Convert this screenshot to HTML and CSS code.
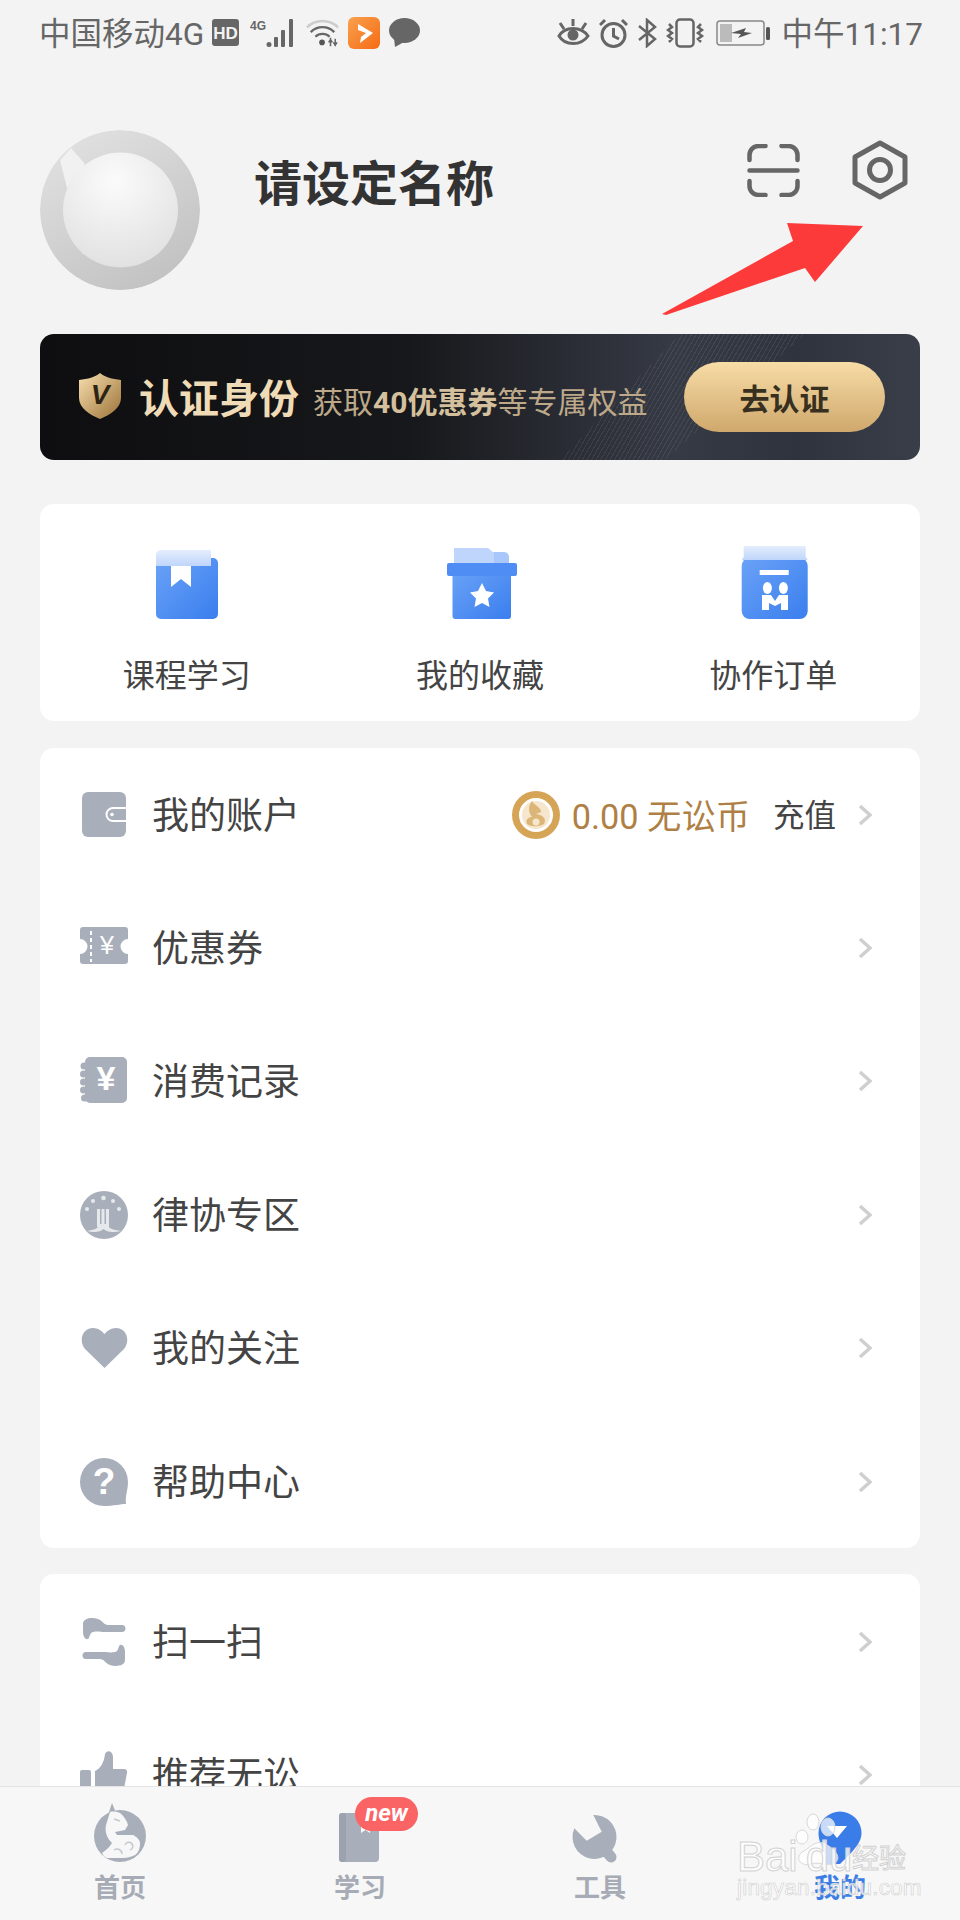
FILE: index.html
```html
<!DOCTYPE html>
<html lang="zh-CN">
<head>
<meta charset="utf-8">
<title>我的</title>
<link rel="stylesheet" href="styles.css">
</head>
<body>
<div class="phone">
  <div class="status">
    <div class="status-group">
      <span class="status-text status-carrier">中国移动4G</span>
      <svg width="29" height="28" viewBox="0 0 29 28"><rect width="27" height="27" rx="3" fill="#666"/><text x="13.5" y="19.5" class="hd">HD</text></svg>
      <svg width="47" height="30" viewBox="0 0 47 30"><text x="0" y="12" class="sig">4G</text><g fill="#666"><circle cx="19" cy="26.5" r="2.5"/><rect x="24" y="19" width="4" height="10" rx="1"/><rect x="31" y="12" width="4" height="17" rx="1"/><rect x="39" y="1" width="4" height="28" rx="1"/></g></svg>
      <svg width="33" height="30" viewBox="0 0 35 30" fill="none"><path d="M1 9 C10 0 25 0 34 9" stroke="#ccc" stroke-width="2.5"/><path d="M5 14 C12 7 23 7 30 14" stroke="#666" stroke-width="2.5"/><path d="M10 19 C14 15 21 15 25 19" stroke="#666" stroke-width="2.5"/><circle cx="17" cy="25" r="3" fill="#555"/><path d="M26 20 v9 M31 29 v-8 M24 25 l2-3 2 3 M29 25 l2 3 2-3" stroke="#666" stroke-width="1.6"/></svg>
      <svg width="32" height="32" viewBox="0 0 32 32"><defs><linearGradient id="ga" x1="0" y1="0" x2="1" y2="1"><stop offset="0" stop-color="#f9a14e"/><stop offset="1" stop-color="#f66b14"/></linearGradient></defs><rect width="32" height="32" rx="6" fill="url(#ga)"/><path d="M10 7 L25 16 L12 26 L13 20 L18 16 L10 13 Z" fill="#fff"/></svg>
      <svg width="31" height="30" viewBox="0 0 31 30"><ellipse cx="15.500" cy="12.500" rx="15.500" ry="12.500" fill="#666"/><path d="M5 20 L6 29 L15 24 Z" fill="#666"/></svg>
    </div>
    <div class="status-group">
      <svg width="33" height="30" viewBox="0 0 33 30" fill="none" stroke="#666" stroke-width="3"><path d="M2 18 C8 8 24 8 31 18 C24 28 8 28 2 18 Z"/><circle cx="16" cy="17" r="5.500" fill="#666" stroke="none"/><path d="M3 5 L7 11 M16 1 V8 M29 5 L25 11"/></svg>
      <svg width="29" height="30" viewBox="0 0 29 30" fill="none" stroke="#666" stroke-width="3"><circle cx="14.500" cy="17" r="11.500"/><path d="M14.500 10 V18 L20 21 M1 7 L6 2 M28 7 L23 2"/></svg>
      <svg width="20" height="30" viewBox="0 0 20 30" fill="none" stroke="#666" stroke-width="2.500"><path d="M2 8 L18 21 L10 28 V2 L18 9 L2 22"/></svg>
      <svg width="41" height="30" viewBox="0 0 41 30" fill="none" stroke="#666" stroke-width="2.500"><rect x="10.500" y="1.500" width="17" height="27" rx="3.500"/><path d="M3 6 L6 9 L2 12 L6 15 L2 18 L6 21 L3 24 M35 6 L32 9 L36 12 L32 15 L36 18 L32 21 L35 24"/></svg>
      <svg width="57" height="26" viewBox="0 0 57 26"><rect x="1" y="1" width="47" height="24" rx="3" fill="none" stroke="#888" stroke-width="1.500"/><rect x="4" y="4" width="12" height="18" fill="#bbb"/><path d="M15 13 L30 8 L28 12 L36 13 L22 18 L25 14 Z" fill="#555"/><rect x="50" y="7" width="4" height="13" rx="1.500" fill="#555"/></svg>
      <span class="status-text">中午11:17</span>
    </div>
  </div>

  <header class="profile">
    <svg class="avatar" width="160" height="160" viewBox="0 0 160 160">
      <defs>
        <linearGradient id="ring" x1="0" y1="0" x2="0.6" y2="1"><stop offset="0" stop-color="#e4e4e4"/><stop offset="1" stop-color="#c3c3c3"/></linearGradient>
        <radialGradient id="ball" cx="0.45" cy="0.25" r="0.85"><stop offset="0" stop-color="#fbfbfb"/><stop offset="1" stop-color="#dedede"/></radialGradient>
      </defs>
      <circle cx="80" cy="80" r="80" fill="url(#ring)"/>
      <path d="M20 30 L31 18 L45 34 L27 58 Z" fill="#f1f1f1"/>
      <circle cx="80.500" cy="80" r="57.500" fill="url(#ball)"/>
    </svg>
    <h1 class="name">请设定名称</h1>
    <div class="actions">
      <svg width="53" height="53" viewBox="0 0 53 53" fill="none" stroke="#666" stroke-width="4.500" stroke-linecap="round"><path d="M2.500 16 V11 a9 9 0 0 1 9-9 h7 M34.500 2 h7 a9 9 0 0 1 9 9 v5 M2.500 37 v5 a9 9 0 0 0 9 9 h7 M34.500 51 h7 a9 9 0 0 0 9-9 v-5 M2.500 26.500 H50.500"/></svg>
      <svg width="56" height="60" viewBox="0 0 56 60" fill="none" stroke="#666" stroke-width="5" stroke-linejoin="round"><path d="M28 3 L53 17 V43 L28 57 L3 43 V17 Z"/><circle cx="28" cy="30" r="10.500"/></svg>
    </div>
  </header>

  <section class="banner">
    <svg class="shield" width="42" height="46" viewBox="0 0 42 46">
      <defs><linearGradient id="gold" x1="0" y1="0" x2="1" y2="1"><stop offset="0" stop-color="#f6dfae"/><stop offset="1" stop-color="#9c7238"/></linearGradient></defs>
      <path d="M21 0 C26 4 33 6 42 7 V25 C42 35 31 42 21 46 C11 42 0 35 0 25 V7 C9 6 16 4 21 0 Z" fill="url(#gold)"/>
      <text x="21" y="31" class="vee">V</text>
    </svg>
    <span class="banner-title">认证身份</span>
    <span class="banner-sub">获取<b>40优惠券</b>等专属权益</span>
    <span class="banner-btn">去认证</span>
  </section>

  <section class="card shortcuts">
    <div class="shortcut">
      <svg width="80" height="76" viewBox="0 0 80 76">
        <defs><linearGradient id="blue" x1="0" y1="0" x2="1" y2="1"><stop offset="0" stop-color="#6aa2f7"/><stop offset="1" stop-color="#3a7eee"/></linearGradient>
        <linearGradient id="pale" x1="0" y1="0" x2="0" y2="1"><stop offset="0" stop-color="#e4edfd"/><stop offset="1" stop-color="#bfd5fb"/></linearGradient></defs>
        <rect x="9" y="12" width="62" height="61" rx="5" fill="url(#blue)"/>
        <path d="M14 4 H64 V20 H9 V9 a5 5 0 0 1 5-5 Z" fill="url(#pale)"/>
        <path d="M24 20 H44 V41 L34 33 L24 41 Z" fill="#fff"/>
      </svg>
      <span>课程学习</span>
    </div>
    <div class="shortcut">
      <svg width="80" height="76" viewBox="0 0 80 76">
        <path d="M50 6 H64 a5 5 0 0 1 5 5 V20 H50 Z" fill="#a9c7fa"/>
        <path d="M14 2 H48 L54 7 V20 H14 Z" fill="#bfd5fb"/>
        <rect x="12.500" y="25" width="58.500" height="48" rx="3" fill="url(#blue)"/>
        <rect x="7" y="17" width="70" height="13" rx="2" fill="#4f8cf3"/>
        <path d="M42 37 L46 45 L54 46.500 L48 52.500 L49.500 61 L42 57 L34.500 61 L36 52.500 L30 46.500 L38 45 Z" fill="#fff"/>
      </svg>
      <span>我的收藏</span>
    </div>
    <div class="shortcut">
      <svg width="80" height="76" viewBox="0 0 80 76">
        <rect x="8.700" y="12" width="66" height="61" rx="8" fill="url(#blue)"/>
        <path d="M10.700 0 H72.700 V11 L74.700 14 H8.700 L10.700 11 Z" fill="url(#pale)"/>
        <rect x="26.700" y="24" width="29" height="5" fill="#fff"/>
        <ellipse cx="34.400" cy="42" rx="4.500" ry="6" fill="#fff"/><ellipse cx="50.400" cy="42" rx="4.500" ry="6" fill="#fff"/>
        <path d="M29 49 H38 L42 55 L46 49 H55 V64 H48 V57 L42 60 L36 57 V64 H29 Z" fill="#fff"/>
      </svg>
      <span>协作订单</span>
    </div>
  </section>

  <section class="card list">
    <div class="row">
      <svg class="ico" width="48" height="48" viewBox="0 0 48 48"><rect x="2" y="1" width="44" height="45" rx="6" fill="#a9afba"/><path d="M46 17 H33 a6.500 6.500 0 0 0 0 13 H46" fill="none" stroke="#fff" stroke-width="2"/><circle cx="32" cy="23.500" r="1.800" fill="#fff"/></svg>
      <span class="label">我的账户</span>
      <svg class="coin" width="48" height="48" viewBox="0 0 48 48"><circle cx="24" cy="24" r="24" fill="#d5a456"/><circle cx="24" cy="24" r="15.500" fill="#f5e6cd" stroke="#fff" stroke-width="3"/><path d="M20 10 C23 15 29 16 29 21 L24 23 C31 24 35 28 32 33 C27 36 19 36 15 33 C13 28 17 26 20 26 C16 21 16 15 20 10 Z" fill="#dcb677"/><circle cx="24" cy="31" r="3.500" fill="#f5e6cd"/></svg>
      <span class="balance">0.00 无讼币</span>
      <span class="recharge">充值</span>
      <svg class="chev" width="14" height="22" viewBox="0 0 14 22"><path d="M2 2 L12 11 L2 20" /></svg>
    </div>
    <div class="row">
      <svg class="ico" width="48" height="48" viewBox="0 0 48 48"><path d="M3 3 H45 a3 3 0 0 1 3 3 V15 a7 7 0 0 0 0 15 V37 a3 3 0 0 1-3 3 H3 a3 3 0 0 1-3-3 V30 a7 7 0 0 0 0-15 V6 a3 3 0 0 1 3-3 Z" fill="#a9afba"/><path d="M11 7 V38" stroke="#fff" stroke-width="2" stroke-dasharray="4 3"/><text x="27" y="30" class="yen small">¥</text></svg>
      <span class="label">优惠券</span>
      <svg class="chev" width="14" height="22" viewBox="0 0 14 22"><path d="M2 2 L12 11 L2 20" /></svg>
    </div>
    <div class="row">
      <svg class="ico" width="48" height="48" viewBox="0 0 48 48"><rect x="5" y="0" width="42" height="46" rx="5" fill="#a9afba"/><g fill="#a9afba"><circle cx="4" cy="9" r="3.500"/><circle cx="3.500" cy="17" r="3.500"/><circle cx="3.500" cy="25" r="3.500"/><circle cx="3.500" cy="33" r="3.500"/><circle cx="4.500" cy="41" r="3.500"/></g><text x="26" y="33" class="yen">¥</text></svg>
      <span class="label">消费记录</span>
      <svg class="chev" width="14" height="22" viewBox="0 0 14 22"><path d="M2 2 L12 11 L2 20" /></svg>
    </div>
    <div class="row">
      <svg class="ico" width="48" height="48" viewBox="0 0 48 48"><circle cx="24" cy="24" r="24" fill="#a9afba"/><g fill="#e6e8ec"><circle cx="7" cy="18" r="2"/><circle cx="13" cy="10" r="2"/><circle cx="23.500" cy="7" r="2.300"/><circle cx="33" cy="10" r="2"/><circle cx="39" cy="18" r="2"/><rect x="17" y="18" width="3" height="18"/><rect x="21.500" y="18" width="3" height="18"/><rect x="26" y="18" width="3" height="18"/></g><path d="M7 40 C14 39 19 37 20 33 H27 C28 37 33 39 41 40 C32 42 27 41 23.500 38 C20 41 15 42 7 40 Z" fill="#e6e8ec"/></svg>
      <span class="label">律协专区</span>
      <svg class="chev" width="14" height="22" viewBox="0 0 14 22"><path d="M2 2 L12 11 L2 20" /></svg>
    </div>
    <div class="row">
      <svg class="ico" width="48" height="48" viewBox="0 0 48 48"><path d="M24.500 44 L5 25 C-2 16 3 4 13 4 C18 4 22 7 24.500 10 C27 7 31 4 36 4 C46 4 51 16 44 25 Z" fill="#a9afba"/></svg>
      <span class="label">我的关注</span>
      <svg class="chev" width="14" height="22" viewBox="0 0 14 22"><path d="M2 2 L12 11 L2 20" /></svg>
    </div>
    <div class="row">
      <svg class="ico" width="48" height="48" viewBox="0 0 48 48"><path d="M24 0 a24 24 0 0 1 24 24 C48 32 45 38 46 46 C40 46 34 48 24 48 a24 24 0 0 1 0-48 Z" fill="#a9afba"/><text x="24" y="36" class="qm">?</text></svg>
      <span class="label">帮助中心</span>
      <svg class="chev" width="14" height="22" viewBox="0 0 14 22"><path d="M2 2 L12 11 L2 20" /></svg>
    </div>
  </section>

  <section class="card list list-more">
    <div class="row">
      <svg class="ico" width="48" height="48" viewBox="0 0 48 48" fill="#a9afba"><path d="M3 6 C3 0 12 -1 18 1 C23 3 24 7 28 7 H42 a3 3 0 0 1 0 7 H24 C20 14 19 13 13 14 C9 15 10 20 8 21 C5 22 3 18 3 14 Z"/><path d="M45 42 C45 48 36 49 30 47 C25 45 24 41 20 41 H6 a3 3 0 0 1 0-7 H24 C28 34 29 35 35 34 C39 33 38 28 40 27 C43 26 45 30 45 34 Z"/></svg>
      <span class="label">扫一扫</span>
      <svg class="chev" width="14" height="22" viewBox="0 0 14 22"><path d="M2 2 L12 11 L2 20" /></svg>
    </div>
    <div class="row">
      <svg class="ico" width="48" height="48" viewBox="0 0 48 48" fill="#a9afba"><rect x="0" y="19" width="11" height="29" rx="2"/><path d="M15 20 C20 18 24 12 25 3 C27 -2 33 0 33 6 V18 H44 a3 3 0 0 1 3 4 L42 48 H15 Z"/></svg>
      <span class="label">推荐无讼</span>
      <svg class="chev" width="14" height="22" viewBox="0 0 14 22"><path d="M2 2 L12 11 L2 20" /></svg>
    </div>
  </section>

  <svg class="arrow" width="210" height="100" viewBox="0 0 210 100"><path d="M2 94 L133 21 L127 3 L203 6 L155 62 L145 48 L6 95 Z" fill="#fd3a3a"/></svg>

  <nav class="tabs">
    <div class="tab">
      <svg width="100" height="72" viewBox="0 0 100 72"><circle cx="50" cy="41" r="26" fill="#a9afba"/><path d="M38 20 L42 8 L46 18 Z" fill="#a9afba"/><path d="M40 17 C44 16 48 17 50 18 C54 21 57 26 58 30 L55 35 L45 37 L47 40 L63 40 C67 42 70 45 70 48 C70 54 68 58 65 60 C61 62 57 63 53 63 L37 63 C34 62 33 60 32 58 C36 55 40 52 42 48 C39 45 37 42 36 38 C35 33 36 29 37 27 C38 24 39 20 40 17 Z" fill="#f7f7f7"/><path d="M55 50 a4 4 0 1 1 5 5 M44 55 a5 5 0 0 1 8 4 M44 24 l6 2" fill="none" stroke="#c4c8d0" stroke-width="1.500"/></svg>
      <span>首页</span>
    </div>
    <div class="tab">
      <svg width="100" height="72" viewBox="0 0 100 72"><rect x="29" y="18" width="40" height="49" rx="4" fill="#a9afba"/><rect x="29" y="18" width="7" height="49" rx="3" fill="#9ca2ae"/><path d="M51 30 H60 V38 L55.500 35 L51 38 Z" fill="#f7f7f7"/></svg>
      <span>学习</span>
      <em class="badge">new</em>
    </div>
    <div class="tab">
      <svg width="100" height="72" viewBox="0 0 100 72"><path d="M24.300 33.300 L36.700 45.700 L51.700 36.700 L43.300 20 A22 22 0 1 1 24.300 33.300 Z" fill="#a9afba"/><path d="M56 56 L61 62" stroke="#a9afba" stroke-width="11" stroke-linecap="round"/></svg>
      <span>工具</span>
    </div>
    <div class="tab tab-on">
      <svg width="100" height="72" viewBox="0 0 100 72"><path d="M28.500 38 a21.500 21.500 0 0 1 43 0 C71.500 46 66 52 62 57 L50 69 H35 V60 C32 52 28.500 46 28.500 38 Z" fill="#3a7de8"/><path d="M37 31 H57 L47 43 Z" fill="#fff"/></svg>
      <span>我的</span>
    </div>
  </nav>

  <div class="watermark">
    <svg class="paw" width="60" height="70" viewBox="0 0 60 70"><g fill="#fff" fill-opacity=".72" stroke="#d8d8d8"><ellipse cx="41" cy="20" rx="7" ry="9"/><ellipse cx="26" cy="15" rx="6" ry="8"/><ellipse cx="15" cy="30" rx="6" ry="7"/><path d="M36 36 C46 40 56 50 48 56 C40 60 30 54 24 57 C15 60 7 52 15 45 C22 42 28 33 36 36 Z"/></g></svg>
    <span class="wm-bai">Bai<i>du</i></span>
    <span class="wm-jy">经验</span>
    <span class="wm-url">jingyan.baidu.com</span>
  </div>
</div>
</body>
</html>
```

FILE: styles.css
```css
* { box-sizing: border-box; }
html, body { margin: 0; padding: 0; }
body { background: #f3f3f3; font-family: Roboto, "Noto Sans CJK SC", sans-serif; color: #444; }
svg { display: block; flex: none; }

.phone { position: relative; width: 960px; height: 1920px; overflow: hidden; background: #f3f3f3; }

.status { display: flex; justify-content: space-between; align-items: center; height: 66px; padding: 0 37px 0 39px; }
.status-group { display: flex; align-items: center; gap: 9px; }
.status-text { margin-top: 4px; font-size: 31.5px; line-height: 40px; color: #666; }
.status-carrier { margin-right: -1px; }
.hd { font: 700 17px "Liberation Sans", sans-serif; fill: #f3f3f3; text-anchor: middle; }
.sig { font: 700 12px "Liberation Sans", sans-serif; fill: #666; }

.profile { display: flex; align-items: flex-start; height: 268px; padding: 64px 52px 0 40px; }
.avatar { border-radius: 50%; }
.name { margin: 27px 0 0 54px; font-size: 48px; line-height: 56px; font-weight: 700; color: #333; }
.actions { display: flex; align-items: center; gap: 52px; margin: 10px 0 0 auto; }

.banner { position: relative; display: flex; align-items: center; height: 126px; margin: 0 40px; padding: 0 35px 0 39px; border-radius: 14px; overflow: hidden; background: linear-gradient(90deg, #0e0e10 0, #17181b 42%, #363a45 72%, #2f333d 86%, #3a3e49 100%); }
.banner::before { content: ""; position: absolute; inset: 0; background: repeating-linear-gradient(120deg, rgba(255,255,255,.08) 0 1px, transparent 1px 4px); clip-path: polygon(640px 0, 765px 0, 625px 126px, 520px 126px); }
.shield { position: relative; margin-bottom: 3px; }
.vee { font: italic 700 28px "Liberation Sans", sans-serif; fill: #2e2415; text-anchor: middle; }
.banner-title { position: relative; margin: 6px 0 0 18px; font-size: 40px; font-weight: 700; line-height: 50px; color: #efdcb6; }
.banner-sub { position: relative; margin: 11px 0 0 14px; font-size: 30px; line-height: 40px; color: #bda98a; white-space: nowrap; }
.banner-sub b { font-weight: 700; color: #d4c09c; }
.banner-btn { position: relative; display: flex; align-items: center; justify-content: center; width: 201px; height: 70px; margin-left: auto; border-radius: 35px; font-size: 30px; font-weight: 700; color: #37301f; background: linear-gradient(180deg, #f7dca6, #cfa86c); }

.card { margin: 0 40px; background: #fff; border-radius: 14px; }
.shortcuts { display: grid; grid-template-columns: repeat(3, 1fr); height: 217px; margin-top: 44px; padding-top: 42px; }
.shortcut { display: flex; flex-direction: column; align-items: center; gap: 34px; font-size: 32px; line-height: 40px; color: #444; }

.list { margin-top: 27px; }
.list-more { margin-top: 26px; padding-top: 1px; }
.row { display: flex; align-items: center; height: 133.4px; padding: 0 48px 0 40px; }
.label { margin: 4px auto 0 24px; font-size: 37px; line-height: 48px; color: #444; }
.coin { margin-right: 12px; }
.balance { margin-top: 4px; font-size: 34.3px; line-height: 44px; color: #b07f45; white-space: nowrap; }
.recharge { margin: 4px 0 0 23px; font-size: 31.5px; line-height: 44px; color: #444; }
.chev { margin-left: 22px; fill: none; stroke: #cfcfcf; stroke-width: 3.5px; }
.yen { font: 700 34px "Liberation Sans", sans-serif; fill: #fff; text-anchor: middle; }
.yen.small { font-size: 25px; font-weight: 400; }
.qm { font: 700 37px "Liberation Sans", sans-serif; fill: #fff; text-anchor: middle; }

.arrow { position: absolute; left: 660px; top: 220px; }

.tabs { position: absolute; left: 0; right: 0; bottom: 0; display: grid; grid-template-columns: repeat(4, 1fr); height: 134px; padding-top: 8px; border-top: 1px solid #e4e4e4; background: #f7f7f7; }
.tab { position: relative; display: flex; flex-direction: column; align-items: center; gap: 6px; font-size: 26px; line-height: 30px; font-weight: 700; color: #a6abb5; }
.tab-on { color: #3d7de6; }
.badge { position: absolute; left: 115px; top: 2px; width: 63px; height: 34px; border-radius: 17px; background: #fb6464; font: italic 700 24px/33px Roboto, sans-serif; color: #fff; text-align: center; }

.watermark { position: absolute; left: 737px; top: 1805px; width: 180px; height: 100px; color: rgba(255,255,255,.78); font-family: "Liberation Sans", sans-serif; -webkit-text-stroke: 1px #d2d2d2; }
.paw { position: absolute; left: 50px; top: 2px; }
.wm-bai { position: absolute; left: 0; top: 28px; font-size: 42px; line-height: 48px; }
.wm-bai i { font-style: normal; margin-left: 8px; }
.wm-jy { position: absolute; left: 115px; top: 34px; font: 27px/36px "Noto Sans CJK SC", sans-serif; }
.wm-url { position: absolute; left: 0; top: 69px; font-size: 22.5px; line-height: 28px; letter-spacing: .2px; white-space: nowrap; -webkit-text-stroke: .6px #cfcfcf; }
```
